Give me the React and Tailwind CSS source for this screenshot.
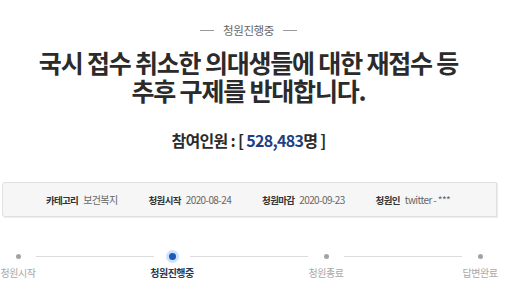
const KR = { fontFamily: '"Noto Sans CJK KR", "Noto Sans", sans-serif' };

const info = [
  { label: "카테고리", value: "보건복지" },
  { label: "청원시작", value: "2020-08-24" },
  { label: "청원마감", value: "2020-09-23" },
  { label: "청원인", value: "twitter - ***" },
];

const steps = ["청원시작", "청원진행중", "청원종료", "답변완료"];

function Step({ label, active }) {
  return (
    <div className="flex w-[36px] flex-col items-center">
      <div className="flex h-[14px] w-[14px] items-center justify-center">
        {active ? (
          <div className="flex h-[13px] w-[13px] items-center justify-center rounded-full bg-[#cfe2fb]">
            <div className="h-[7px] w-[7px] rounded-full bg-[#1d5bb5]" />
          </div>
        ) : (
          <div className="h-[5px] w-[5px] rounded-full bg-[#a3a3a3]" />
        )}
      </div>
      <div
        className={
          "mt-[3px] whitespace-nowrap text-[10px] leading-[14px] tracking-[-0.5px] " +
          (active ? "font-bold text-[#2a3a55]" : "text-[#a8a8a8]")
        }
      >
        {label}
      </div>
    </div>
  );
}

export default function App() {
  return (
    <div className="h-[307px] w-[512px] overflow-hidden bg-white" style={KR}>
      <div className="w-[497px]">
        <div className="flex items-center justify-center gap-[9px] pt-[21px]">
          <div className="h-px w-[14px] bg-[#9a9a9a]" />
          <div className="text-[11.5px] leading-[18px] tracking-[-0.4px] text-[#666]">청원진행중</div>
          <div className="h-px w-[14px] bg-[#9a9a9a]" />
        </div>

        <h1 className="mt-[9px] text-center text-[25px] font-bold leading-[28px] tracking-[-1.2px] text-[#2b2b2b]">
          국시 접수 취소한 의대생들에 대한 재접수 등
          <br />
          추후 구제를 반대합니다.
        </h1>

        <div className="mt-[25px] text-center text-[16px] font-bold leading-[22px] tracking-[-0.7px] text-[#2b2b2b]">
          참여인원 : [ <span className="text-[#1f3f85]">528,483</span>명 ]
        </div>

        <div className="ml-[2px] mt-[31px] flex h-[35px] w-[495px] items-center gap-[31px] rounded-l-[3px] border border-[#e1e1e1] bg-[#f6f6f6] pl-[43px] shadow-[1px_1px_0_#ececec]">
          {info.map((it, i) => (
            <div key={i} className="flex items-center gap-[5px] text-[10px] leading-[14px]">
              <span className="text-[9.5px] font-bold tracking-[-0.7px] text-[#333]">{it.label}</span>
              <span className="tracking-[-0.6px] text-[#666]">{it.value}</span>
            </div>
          ))}
        </div>

        <div className="mt-[32px] flex w-[498px] items-start">
          {steps.map((s, i) => (
            <div key={s} className="contents">
              <Step label={s} active={i === 1} />
              {i < steps.length - 1 && <div className="mt-[7px] h-px flex-1 bg-[#dcdcdc]" />}
            </div>
          ))}
        </div>
      </div>
    </div>
  );
}
